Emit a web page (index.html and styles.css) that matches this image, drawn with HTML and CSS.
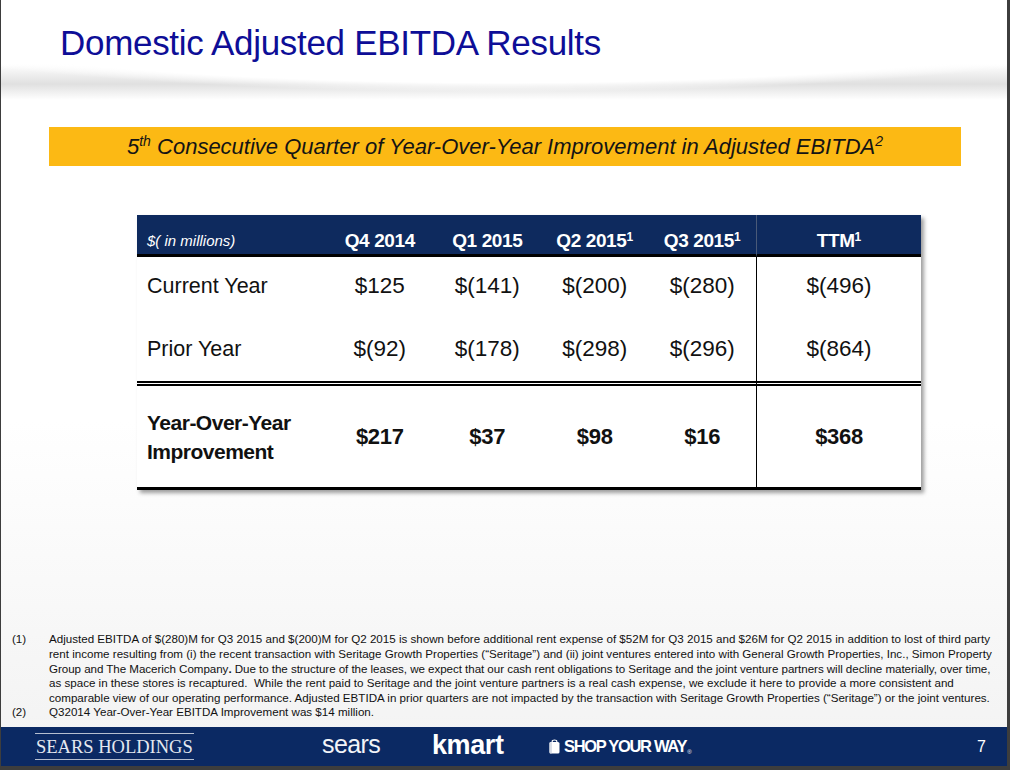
FILE: index.html
```html
<!DOCTYPE html>
<html lang="en">
<head>
<meta charset="utf-8">
<title>Domestic Adjusted EBITDA Results</title>
<link rel="stylesheet" href="styles.css">
</head>
<body>
<div class="slide">
  <header class="hdr">
    <h1 class="title">Domestic Adjusted EBITDA Results</h1>
  </header>

  <div class="banner"><span class="banner-text">5<sup>th</sup> Consecutive Quarter of Year-Over-Year Improvement in Adjusted EBITDA<sup>2</sup></span></div>

  <table class="results">
    <colgroup>
      <col class="c-lbl"><col class="c-q"><col class="c-q"><col class="c-q"><col class="c-q"><col class="c-ttm">
    </colgroup>
    <thead>
      <tr>
        <th class="lbl">$( in millions)</th>
        <th>Q4 2014</th>
        <th>Q1 2015</th>
        <th>Q2 2015<sup>1</sup></th>
        <th>Q3 2015<sup>1</sup></th>
        <th class="ttm">TTM<sup>1</sup></th>
      </tr>
    </thead>
    <tbody>
      <tr class="r1">
        <td class="lbl">Current Year</td>
        <td>$125</td>
        <td>$(141)</td>
        <td>$(200)</td>
        <td>$(280)</td>
        <td class="ttm">$(496)</td>
      </tr>
      <tr class="r2">
        <td class="lbl">Prior Year</td>
        <td>$(92)</td>
        <td>$(178)</td>
        <td>$(298)</td>
        <td>$(296)</td>
        <td class="ttm">$(864)</td>
      </tr>
      <tr class="r3">
        <td class="lbl">Year-Over-Year<br>Improvement</td>
        <td>$217</td>
        <td>$37</td>
        <td>$98</td>
        <td>$16</td>
        <td class="ttm">$368</td>
      </tr>
    </tbody>
  </table>

  <div class="spacer"></div>

  <div class="notes">
    <span class="num">(1)</span>
    <p class="txt">Adjusted EBITDA of $(280)M for Q3 2015 and $(200)M for Q2 2015 is shown before additional rent expense of $52M for Q3 2015 and $26M for Q2 2015 in addition to lost of third party<br>rent income resulting from (i) the recent transaction with Seritage Growth Properties (“Seritage”) and (ii) joint ventures entered into with General Growth Properties, Inc., Simon Property<br><span class="tight">Group and The Macerich Company<b>.</b> Due to the structure of the leases, we expect that our cash rent obligations to Seritage and the joint venture partners will decline materially, over time,</span><br>as space in these stores is recaptured. &nbsp;While the rent paid to Seritage and the joint venture partners is a real cash expense, we exclude it here to provide a more consistent and<br>comparable view of our operating performance. Adjusted EBTIDA in prior quarters are not impacted by the transaction with Seritage Growth Properties (“Seritage”) or the joint ventures.</p>
    <span class="num">(2)</span>
    <p class="txt">Q32014 Year-Over-Year EBITDA Improvement was $14 million.</p>
  </div>

  <footer class="ftr">
    <div class="holdings"><span class="holdings-text">SEARS HOLDINGS</span></div>
    <div class="sears">sears</div>
    <div class="kmart">kmart</div>
    <div class="syw">
      <svg class="bag" width="11" height="15" viewBox="0 0 11 15" aria-hidden="true">
        <path d="M3.2 3.2 V2.2 C3.2 0.6 7.8 0.6 7.8 2.2 V3.2" fill="none" stroke="#fff" stroke-width="1.2"/>
        <rect x="0.5" y="3" width="10" height="11.5" rx="1.6" fill="#fff"/>
        <rect x="0.5" y="3" width="2.4" height="11.5" rx="1" fill="#d7dce6"/>
      </svg>
      <span class="syw-text">SHOP YOUR WAY</span><span class="reg">®</span>
    </div>
    <div class="page">7</div>
  </footer>
</div>
</body>
</html>
```

FILE: styles.css
```css
html, body {
  margin: 0;
  padding: 0;
}

body {
  background: #3d3d3d;
  width: 1010px;
  height: 770px;
  overflow: hidden;
}

.slide {
  margin-left: 1px;
  width: 1006px;
  height: 766px;
  display: flex;
  flex-direction: column;
  background: linear-gradient(#ffffff 0, #ffffff 55%, #f2f2f2 100%);
  font-family: "Liberation Sans", Arial, sans-serif;
  color: #111;
}

/* ---------- header ---------- */
.hdr {
  flex: none;
  height: 100px;
  background:
    radial-gradient(75% 92px at 50% 0, #ffffff 90%, rgba(255, 255, 255, 0) 100%),
    linear-gradient(#ffffff 64px, #e0e0e0 84px, #ffffff 100px);
}

.title {
  margin: 0;
  padding: 23px 0 0 59px;
  font-size: 35px;
  line-height: 40px;
  font-weight: normal;
  color: #0e0e97;
  letter-spacing: -0.3px;
}

/* ---------- banner ---------- */
.banner {
  flex: none;
  margin: 27px 0 0 48px;
  width: 912px;
  height: 39px;
  background: #fcb914;
  text-align: center;
  font-style: italic;
  font-size: 22px;
  line-height: 39px;
  color: #141414;
}

.banner sup {
  font-size: 14px;
  line-height: 0;
  vertical-align: super;
}

/* ---------- table ---------- */
.results {
  flex: none;
  margin: 49px 0 0 136px;
  width: 784px;
  border-collapse: separate;
  border-spacing: 0;
  table-layout: fixed;
  background: #fff;
  box-shadow: 3px 3px 4px rgba(0, 0, 0, 0.38);
}

.c-lbl { width: 189px; }
.c-q { width: 107.5px; }
.c-ttm { width: 165px; }

.results th {
  height: 38px;
  padding: 0 0 1px 0;
  background: #0e2a5e;
  color: #fff;
  font-size: 19px;
  font-weight: bold;
  letter-spacing: -0.4px;
  text-align: center;
  vertical-align: bottom;
  border-bottom: 3px solid #000;
  line-height: 24px;
}

.results th.lbl {
  text-align: left;
  padding-left: 10px;
  font-size: 15px;
  font-weight: normal;
  font-style: italic;
  letter-spacing: 0;
}

.results th sup {
  font-size: 12px;
  line-height: 0;
  vertical-align: 6px;
  letter-spacing: 0;
}

.results .ttm {
  border-left: 1px solid #000;
}

.results th.ttm {
  border-left-color: #4a5a78;
}

.results td {
  padding: 0;
  text-align: center;
  vertical-align: middle;
  font-size: 22.5px;
  color: #111;
}

.results td.lbl {
  text-align: left;
  padding-left: 10px;
  font-size: 21.5px;
}

.r1 td {
  height: 58px;
  padding-bottom: 2px;
}

.r2 td {
  height: 64px;
  border-bottom: 5px double #000;
}

.r3 td {
  height: 101px;
  font-weight: bold;
  font-size: 22px;
  border-bottom: 3px solid #000;
  letter-spacing: -0.3px;
}

.r3 td.lbl {
  font-size: 21px;
  line-height: 29px;
  letter-spacing: -0.5px;
}

/* ---------- notes ---------- */
.spacer {
  flex: 1;
}

.notes {
  flex: none;
  display: grid;
  grid-template-columns: 37px 1fr;
  padding: 0 0 7px 11px;
  font-size: 11.6px;
  line-height: 14.6px;
  color: #111;
}

.notes .txt {
  margin: 0;
  white-space: nowrap;
}

.notes .tight {
  letter-spacing: -0.05px;
}

/* ---------- footer ---------- */
.ftr {
  flex: none;
  height: 39px;
  background: #0b2963;
  display: grid;
  grid-template-columns: 287px 110px 116px 1fr auto;
  align-items: center;
  padding: 0 21px 0 34px;
  color: #fff;
}

.holdings-text {
  display: inline-block;
  font-family: "Liberation Serif", "Times New Roman", serif;
  font-size: 18.5px;
  line-height: 20px;
  padding: 3px 1px 2px;
  color: #e4e8f0;
  border-top: 1px solid rgba(255, 255, 255, 0.7);
  border-bottom: 1px solid rgba(255, 255, 255, 0.7);
}

.sears {
  font-size: 25px;
  letter-spacing: -0.6px;
  line-height: 1;
  padding-bottom: 4px;
  color: #f2f4f8;
}

.kmart {
  font-size: 27px;
  font-weight: bold;
  letter-spacing: -0.4px;
  line-height: 1;
  padding-bottom: 3px;
}

.syw {
  display: flex;
  align-items: center;
  padding-left: 1px;
}

.bag {
  flex: none;
  margin-right: 4px;
}

.syw-text {
  font-size: 16.5px;
  font-weight: bold;
  letter-spacing: -1.3px;
}

.reg {
  font-size: 6px;
  align-self: flex-start;
  margin-top: 12px;
  margin-left: 1px;
}

.page {
  font-size: 16px;
}
```
